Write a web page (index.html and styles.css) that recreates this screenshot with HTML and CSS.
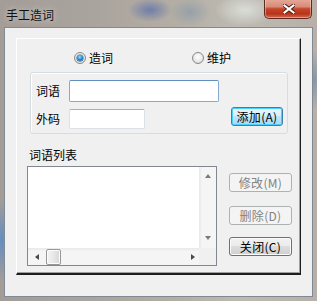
FILE: index.html
```html
<!DOCTYPE html>
<html lang="zh-CN">
<head>
<meta charset="utf-8">
<title>手工造词</title>
<link rel="stylesheet" href="styles.css">
</head>
<body>
<div class="window">
  <div class="titlebar">
    <span class="title">手工造词</span>
    <div class="close">
      <svg width="12" height="10" viewBox="0 0 12 10">
        <path d="M1.5 1.5 L10.5 8.5 M10.5 1.5 L1.5 8.5" stroke="#4a1a10" stroke-width="4" stroke-linecap="square" fill="none"/>
        <path d="M1.5 1.5 L10.5 8.5 M10.5 1.5 L1.5 8.5" stroke="#ffffff" stroke-width="2.2" stroke-linecap="square" fill="none"/>
      </svg>
    </div>
  </div>
  <div class="client">
    <div class="panel">
      <div class="radios">
        <label class="radio radio-first"><span class="dot on"></span><span class="rtext">造词</span></label>
        <label class="radio"><span class="dot"></span><span class="rtext">维护</span></label>
      </div>
      <div class="editbox">
        <div class="erow">
          <span class="elabel">词语</span>
          <div class="input input-word"></div>
        </div>
        <div class="erow erow2">
          <span class="elabel">外码</span>
          <div class="input input-code"></div>
          <div class="btn btn-focus btn-add">添加(A)</div>
        </div>
      </div>
      <div class="listlabel">词语列表</div>
      <div class="listrow">
        <div class="listbox">
          <div class="listarea"></div>
          <div class="vscroll">
            <span class="arr arr-up"></span>
            <span class="arr arr-down"></span>
          </div>
          <div class="hscroll">
            <span class="arr arr-left"></span>
            <span class="thumb"></span>
            <span class="arr arr-right"></span>
          </div>
          <div class="corner"></div>
        </div>
        <div class="btncol">
          <div class="btn btn-disabled">修改(M)</div>
          <div class="btn btn-disabled btn-del">删除(D)</div>
          <div class="btn btn-normal btn-close">关闭(C)</div>
        </div>
      </div>
    </div>
  </div>
</div>
</body>
</html>
```

FILE: styles.css
```css
* { box-sizing: border-box; }
html, body { margin: 0; padding: 0; }
body {
  width: 317px;
  height: 301px;
  overflow: hidden;
  font-family: "Noto Sans CJK SC", "Noto Sans", sans-serif;
  font-size: 12px;
  color: #000;
}
.window {
  width: 317px;
  height: 301px;
  display: flex;
  flex-direction: column;
  padding: 0 4px 4px 4px;
  background:
    radial-gradient(ellipse 22px 12px at 150px 10px, rgba(90,110,170,0.75), rgba(90,110,170,0) 100%),
    radial-gradient(ellipse 20px 14px at 190px 12px, rgba(130,150,170,0.6), rgba(130,150,170,0) 100%),
    radial-gradient(ellipse 30px 16px at 245px 10px, rgba(225,230,225,0.8), rgba(225,230,225,0) 100%),
    radial-gradient(ellipse 8px 40px at 2px 240px, rgba(90,140,200,0.9), rgba(90,140,200,0) 100%),
    radial-gradient(ellipse 8px 30px at 314px 80px, rgba(120,140,170,0.8), rgba(120,140,170,0) 100%),
    linear-gradient(90deg, #a39c97 0%, #aaa49e 30%, #b3ada4 55%, #bdbab2 75%, #b8b0a8 100%);
}
.titlebar {
  height: 27px;
  display: flex;
  align-items: flex-start;
  padding-left: 2px;
}
.title {
  margin-top: 7px;
  line-height: 16px;
  font-size: 12px;
  color: #101010;
  text-shadow: 0 0 6px rgba(255,255,255,0.7);
}
.close {
  margin-left: auto;
  margin-right: 1px;
  width: 48px;
  height: 20px;
  margin-top: -1px;
  border: 1px solid #5c2a20;
  border-top: none;
  border-radius: 0 0 5px 5px;
  background: linear-gradient(#e6aa9a 0%, #d98c79 40%, #c6452a 52%, #b83419 78%, #d06a50 100%);
  box-shadow: inset 0 0 0 1px rgba(255,220,210,0.45);
  display: flex;
  align-items: center;
  justify-content: center;
  padding-left: 2px;
}
.close svg { display: block; }
.client {
  flex: 1;
  background: #f0f0f0;
  border: 1px solid #7f8a94;
  padding: 10px 0 0 11px;
}
.panel {
  width: 285px;
  height: 237px;
  border-top: 1px solid #ffffff;
  border-left: 1px solid #ffffff;
  border-right: 1px solid #1e1e1e;
  border-bottom: 2px solid #1e1e1e;
  box-shadow: inset -1px -1px 0 #a0a0a0;
  display: flex;
  flex-direction: column;
}
.radios {
  margin-top: 11px;
  height: 16px;
  padding-left: 57px;
  display: flex;
  align-items: center;
}
.radio {
  display: flex;
  align-items: center;
  height: 16px;
}
.radio-first { width: 118px; }
.dot {
  width: 12px;
  height: 12px;
  border-radius: 50%;
  border: 1px solid #8a8a8a;
  background: radial-gradient(circle at 50% 40%, #ffffff 0%, #f0f0f0 40%, #cfcfcf 100%);
  position: relative;
}
.dot.on::after {
  content: "";
  position: absolute;
  left: 2px;
  top: 2px;
  width: 6px;
  height: 6px;
  border-radius: 50%;
  background: radial-gradient(circle at 45% 35%, #9fe0ff 0%, #2b8fd6 45%, #0d4f8f 100%);
  box-shadow: 0 0 0 0.5px #1c4f80;
}
.rtext {
  margin-left: 3px;
  line-height: 16px;
}
.editbox {
  margin-top: 6px;
  margin-left: 13px;
  width: 258px;
  height: 62px;
  border: 1px solid #d3dde4;
  border-radius: 3px;
  box-shadow: inset 1px 1px 0 #ffffff;
  padding: 7px 4px 0 5px;
  display: flex;
  flex-direction: column;
}
.erow {
  display: flex;
  align-items: center;
  height: 22px;
}
.erow2 {
  margin-top: 7px;
  height: 20px;
}
.elabel {
  width: 33px;
  line-height: 16px;
}
.input {
  background: #fff;
}
.input-word {
  width: 150px;
  height: 22px;
  border: 1px solid #86a9cf;
  border-top-color: #5d8ebf;
  border-radius: 2px;
}
.input-code {
  width: 76px;
  height: 20px;
  border: 1px solid #dbdfe6;
  border-top-color: #abadb3;
  border-radius: 2px;
}
.btn {
  width: 63px;
  height: 19px;
  border-radius: 3px;
  display: flex;
  align-items: center;
  justify-content: center;
  line-height: 16px;
  font-size: 12px;
  letter-spacing: 0.3px;
}
.btn-add {
  margin-left: auto;
  width: 52px;
  margin-top: -2px;
  align-self: flex-start;
}
.btn-focus {
  border: 1px solid #3c7fb1;
  background: linear-gradient(#eaf6fd 0%, #d9f0fc 45%, #bee6fd 50%, #a7d9f5 100%);
  box-shadow: inset 0 0 0 1px #48d0fb;
}
.btn-disabled {
  border: 1px solid #adb2b5;
  background: #f4f4f4;
  color: #838383;
}
.btn-normal {
  border: 1px solid #707070;
  background: linear-gradient(#f2f2f2 0%, #ebebeb 45%, #dddddd 50%, #cfcfcf 100%);
  box-shadow: inset 0 0 0 1px #fbfbfb;
}
.listlabel {
  margin-top: 13px;
  margin-left: 12px;
  line-height: 16px;
  height: 16px;
}
.listrow {
  margin-top: 3px;
  display: flex;
  align-items: flex-start;
}
.listbox {
  margin-left: 10px;
  width: 190px;
  height: 100px;
  border: 1px solid #828790;
  background: #fff;
  display: grid;
  grid-template-columns: 1fr 17px;
  grid-template-rows: 1fr 17px;
}
.listarea { background: #fff; }
.vscroll {
  background: linear-gradient(90deg, #e9e9e9 0%, #f5f5f5 20%, #f5f5f5 100%);
  display: flex;
  flex-direction: column;
  justify-content: space-between;
  align-items: center;
  padding: 7px 0 8px 0;
}
.hscroll {
  background: linear-gradient(#e9e9e9 0%, #f5f5f5 20%, #f5f5f5 100%);
  display: flex;
  align-items: center;
  padding: 0 4px 0 7px;
}
.corner { background: #f0f0f0; }
.arr {
  width: 0;
  height: 0;
  display: block;
}
.arr-up {
  border-left: 3.5px solid transparent;
  border-right: 3.5px solid transparent;
  border-bottom: 4px solid #7a7a7a;
}
.arr-down {
  border-left: 3.5px solid transparent;
  border-right: 3.5px solid transparent;
  border-top: 4px solid #7a7a7a;
}
.arr-left {
  border-top: 3.5px solid transparent;
  border-bottom: 3.5px solid transparent;
  border-right: 4px solid #4a4a4a;
}
.arr-right {
  margin-left: auto;
  border-top: 3.5px solid transparent;
  border-bottom: 3.5px solid transparent;
  border-left: 4px solid #4a4a4a;
}
.thumb {
  margin-left: 7px;
  width: 15px;
  height: 16px;
  border: 1px solid #979797;
  border-radius: 2px;
  background: linear-gradient(90deg, #f3f3f3 0%, #e8e8e8 50%, #d6d6d6 100%);
  box-shadow: inset 0 0 0 1px #fcfcfc;
}
.btncol {
  margin-left: 12px;
  padding-top: 7px;
  display: flex;
  flex-direction: column;
}
.btn-del { margin-top: 14px; }
.btn-close { margin-top: 12px; }
```
